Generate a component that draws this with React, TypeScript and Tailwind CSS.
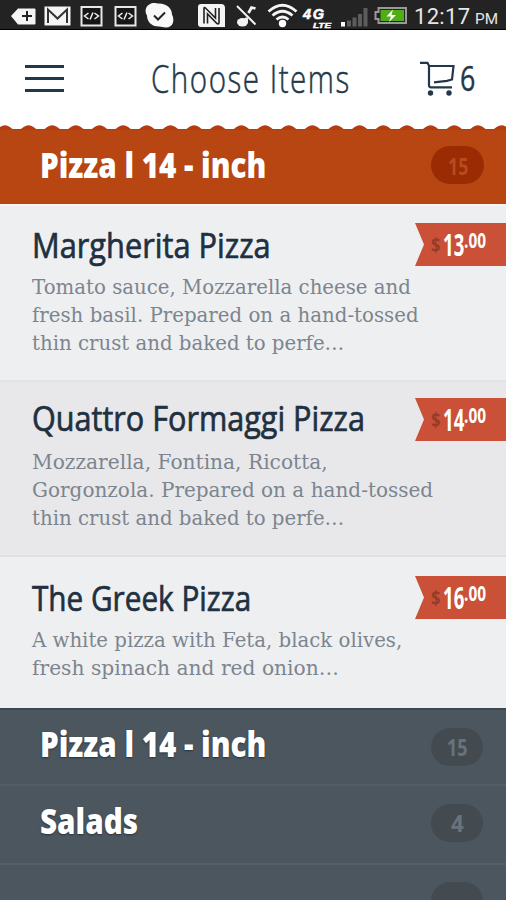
import { useLayoutEffect, useRef, useState, type ReactNode } from "react";

/** One line of text, narrowed or widened to a given width. */
function Fit({ w, className = "", children }: { w: number; className?: string; children: ReactNode }) {
  const ref = useRef<HTMLSpanElement>(null);
  const [scale, setScale] = useState(1);
  useLayoutEffect(() => {
    if (ref.current) setScale(w / ref.current.offsetWidth);
  }, [w]);
  return (
    <span className={`block whitespace-nowrap ${className}`} style={{ width: w }}>
      <span ref={ref} className="inline-block origin-left" style={{ transform: `scaleX(${scale})` }}>
        {children}
      </span>
    </span>
  );
}

function StatusBar() {
  return (
    <div className="h-[30px] border-b border-black bg-[#232323]">
      <svg width="506" height="30" viewBox="0 0 506 30" className="block">
        <path d="M11 16l7-7.5h16.500q1 0 1 1v14q0 1-1 1H18z" fill="#f4f4f4" />
        <path d="M22 16h10M27 11v10" stroke="#222" strokeWidth="2" />
        <rect x="44.500" y="6.500" width="26" height="19" fill="#f4f4f4" />
        <path d="M48 23V9.500l9.500 9 9.500-9V23" fill="none" stroke="#333" strokeWidth="2" />
        {[80.5, 114.5].map((x) => (
          <g key={x} transform={`translate(${x} 6)`}>
            <rect x="1" y="1" width="20" height="18.500" fill="#161616" stroke="#e8e8e8" strokeWidth="2" />
            <path d="M8 7l-4 3 4 3M14 7l4 3-4 3M12.500 6.500l-3 7" fill="none" stroke="#eee" strokeWidth="1.500" />
          </g>
        ))}
        <path d="M151 3.500c4-1 5 0 8 0 8 0 13 5 13 11 3 6 1 13-6 13-3 0-4-1-7-1-8 0-12-5-12-11-3-5-1-10 4-12z" fill="#f8f8f8" />
        <path d="M154 15.500l4 4 7-7" fill="none" stroke="#222" strokeWidth="2" />
        <path d="M201 4h20q4 0 4 4v19h-24q-3 0-3-3V7q0-3 3-3z" fill="#f5f5f5" />
        <path d="M204 23.500V8.500q0-1.500 1.500-.5l10 10V8M207.500 23.500V14l9.500 9.500q2 1 2-1V8" fill="none" stroke="#222" strokeWidth="1.600" />
        <path d="M237 6l18.500 18.500" stroke="#f2f2f2" strokeWidth="2" />
        <ellipse cx="242.500" cy="22.300" rx="5.500" ry="4.200" fill="#f2f2f2" />
        <path d="M246.500 22v-4.500M248.500 13l3-5.500 4 1" fill="none" stroke="#f2f2f2" strokeWidth="2.800" />
        <g fill="none" stroke="#f5f5f5" strokeWidth="2.800">
          <path d="M268.500 11.500q14-12.500 28 0" />
          <path d="M272.500 15.500q10-8.500 20 0" />
          <path d="M276.500 19.500q6-5 12 0" />
        </g>
        <circle cx="282.500" cy="23.500" r="3.700" fill="#fff" />
        <text x="303" y="19" fontSize="14.500" fontWeight="700" fontStyle="italic" fontFamily="Liberation Sans, sans-serif" fill="#fff" stroke="#fff" strokeWidth=".6" textLength="21">4G</text>
        <text x="313" y="27.500" fontSize="7.500" fontWeight="700" fontStyle="italic" fontFamily="Liberation Sans, sans-serif" fill="#fff" stroke="#fff" strokeWidth=".4" textLength="18" lengthAdjust="spacingAndGlyphs">LTE</text>
        <rect x="341" y="22" width="4" height="4.500" fill="#fff" />
        <path d="M349 26.500v-6M354.500 26.500v-9M360 26.500V14M365.500 26.500V8" stroke="#5c5c5c" strokeWidth="4" />
        <path d="M378.500 8H406v15h-27.500v-4H375.500v-7h3z" fill="#232323" stroke="#999" strokeWidth="2" />
        <rect x="380.500" y="10" width="23.500" height="11" fill="#4fae16" />
        <path d="M393 9.500l-6.500 7h4.500l-2 5.500 7-7h-4.500z" fill="#fff" />
        <text x="414" y="24" fontSize="22" fontFamily="Roboto, sans-serif" fill="#e6e6e6" textLength="56">12:17</text>
        <text x="475" y="24" fontSize="15" fontFamily="Roboto, sans-serif" fill="#e6e6e6" textLength="23" lengthAdjust="spacingAndGlyphs">PM</text>
      </svg>
    </div>
  );
}

function CartIcon() {
  return (
    <svg width="36" height="38" viewBox="0 0 36 38" fill="none" stroke="#22384a" strokeWidth="2.200">
      <path d="M0 2.800h7.500l1.500 3v19.500q0 2 2 2h21" />
      <path d="M9 6h24.500l-1.500 13.500-5 1.300-13 1.500" />
      <circle cx="10.500" cy="33" r="2.700" fill="#22384a" stroke="none" />
      <circle cx="29" cy="33" r="2.700" fill="#22384a" stroke="none" />
    </svg>
  );
}

function Scallops() {
  const humps = Array.from({ length: 23 }, (_, i) => 4.9 + i * 23.65);
  return (
    <svg width="506" height="5" viewBox="0 0 506 5" className="block">
      <rect y="4" width="506" height="1" fill="#b43c10" />
      {humps.map((x) => (
        <path key={x} transform={`translate(${x} 0)`} d="M-10 5Q-7 4-5 2Q0-1.500 5 2Q7 4 10 5Z" fill="#b43c10" />
      ))}
    </svg>
  );
}

function PriceTag({ whole }: { whole: string }) {
  return (
    <div className="flex h-[43px] w-[91px] bg-[#cb5038] pl-4 pt-[3px] font-['Open_Sans',sans-serif] font-bold [clip-path:polygon(0_0,100%_0,100%_100%,0_100%,9px_50%)]">
      <Fit w={9} className="pt-[2px] text-[20px] leading-[34px] text-[#943c29]">$</Fit>
      <Fit w={21} className="ml-[3px] text-[31px] leading-[36px] text-white">{whole}</Fit>
      <Fit w={22} className="text-[21px] leading-[28px] text-white">.00</Fit>
    </div>
  );
}

type Item = { name: string; nameW: number; nameBox: string; price: string; lines: [string, number][]; box: string };

const items: Item[] = [
  {
    name: "Margherita Pizza", nameW: 239, nameBox: "h-[50px] leading-[43px]", price: "13",
    lines: [["Tomato sauce, Mozzarella cheese and", 379], ["fresh basil. Prepared on a hand-tossed", 387], ["thin crust and baked to perfe…", 312]],
    box: "h-[176px] bg-[#eeeff1] pt-[17px] border-b-2 border-[#e1e3e5]",
  },
  {
    name: "Quattro Formaggi Pizza", nameW: 333, nameBox: "h-[50px] leading-[40px]", price: "14",
    lines: [["Mozzarella, Fontina, Ricotta,", 296], ["Gorgonzola. Prepared on a hand-tossed", 401], ["thin crust and baked to perfe…", 312]],
    box: "h-[175px] bg-[#e8e8ea] pt-[16px] border-b-2 border-[#dfe0e2]",
  },
  {
    name: "The Greek Pizza", nameW: 219, nameBox: "h-[50px] leading-[43px]", price: "16",
    lines: [["A white pizza with Feta, black olives,", 370], ["fresh spinach and red onion…", 307]],
    box: "h-[151px] bg-[#eeeff1] pt-[19px]",
  },
];

function MenuItem({ item }: { item: Item }) {
  return (
    <article className={`flex justify-between pl-8 ${item.box}`}>
      <div className="w-[383px] shrink-0">
        <Fit w={item.nameW} className={`font-['Open_Sans',sans-serif] text-[35px] text-[#203040] [-webkit-text-stroke:0.7px_#203040] ${item.nameBox}`}>{item.name}</Fit>
        {item.lines.map(([line, w]) => (
          <Fit key={line} w={w} className="h-[28px] font-['DejaVu_Serif',serif] text-[21px] leading-[28px] text-[#7c858f]">{line}</Fit>
        ))}
      </div>
      <PriceTag whole={item.price} />
    </article>
  );
}

export default function App() {
  return (
    <main className="h-[900px] w-[506px] overflow-hidden bg-white">
      <StatusBar />
      <header className="flex h-[95px] items-start bg-white">
        <div className="ml-[25px] mt-[35px] flex w-[39px] flex-col gap-[9px]">
          <i className="h-[3px] bg-[#22384a]" />
          <i className="h-[3px] bg-[#22384a]" />
          <i className="h-[3px] bg-[#22384a]" />
        </div>
        <Fit w={200} className="ml-[87px] mt-[20px] font-['Open_Sans',sans-serif] text-[39px] font-light leading-[56px] tracking-[2px] text-[#22384a] [-webkit-text-stroke:0.5px_#22384a]">Choose Items</Fit>
        <div className="ml-[69px] mt-[30px]"><CartIcon /></div>
        <Fit w={15} className="ml-[4px] mt-[23px] font-['Open_Sans',sans-serif] text-[34px] leading-[50px] text-[#22384a] [-webkit-text-stroke:0.4px_#22384a]">6</Fit>
      </header>
      <Scallops />
      <section className="flex h-[74px] justify-between bg-[#b74613] pl-10 pr-[22px]">
        <Fit w={226} className="mt-[10px] font-['Open_Sans',sans-serif] text-[36px] font-extrabold leading-[50px] text-white">Pizza l 14 - inch</Fit>
        <div className="mt-4 flex h-[38px] w-[53px] justify-center rounded-full bg-[#9a2b03]">
          <Fit w={20} className="font-['Open_Sans',sans-serif] text-[24px] font-bold leading-[39px] text-[#b84a20]">15</Fit>
        </div>
      </section>
      <div className="h-[2px] bg-[#fbf3ef]" />
      {items.map((item) => <MenuItem key={item.name} item={item} />)}
      <section className="h-[192px] border-t-2 border-[#3c4750] bg-[#4c565e]">
        <div className="flex h-[76px] justify-between border-b-2 border-[#535f67] pl-10 pr-[23px]">
          <Fit w={226} className="mt-[9px] font-['Open_Sans',sans-serif] text-[36px] font-extrabold leading-[50px] text-white [text-shadow:0_1px_2px_#26323c]">Pizza l 14 - inch</Fit>
          <div className="mt-[18px] flex h-[38px] w-[52px] justify-center rounded-full bg-[#434b51]">
            <Fit w={20} className="font-['Open_Sans',sans-serif] text-[24px] font-bold leading-[37px] text-[#68737c]">15</Fit>
          </div>
        </div>
        <div className="flex h-[79px] justify-between border-b-2 border-[#535f67] pl-10 pr-[23px]">
          <Fit w={98} className="mt-[10px] font-['Open_Sans',sans-serif] text-[36px] font-extrabold leading-[50px] text-white [text-shadow:0_1px_2px_#26323c]">Salads</Fit>
          <div className="mt-[18px] flex h-[38px] w-[52px] justify-center rounded-full bg-[#434b51]">
            <Fit w={13} className="font-['Open_Sans',sans-serif] text-[24px] font-bold leading-[37px] text-[#68737c]">4</Fit>
          </div>
        </div>
        <div className="flex justify-end pr-[23px] pt-[17px]">
          <div className="h-[38px] w-[52px] rounded-full bg-[#434b51]" />
        </div>
      </section>
    </main>
  );
}
